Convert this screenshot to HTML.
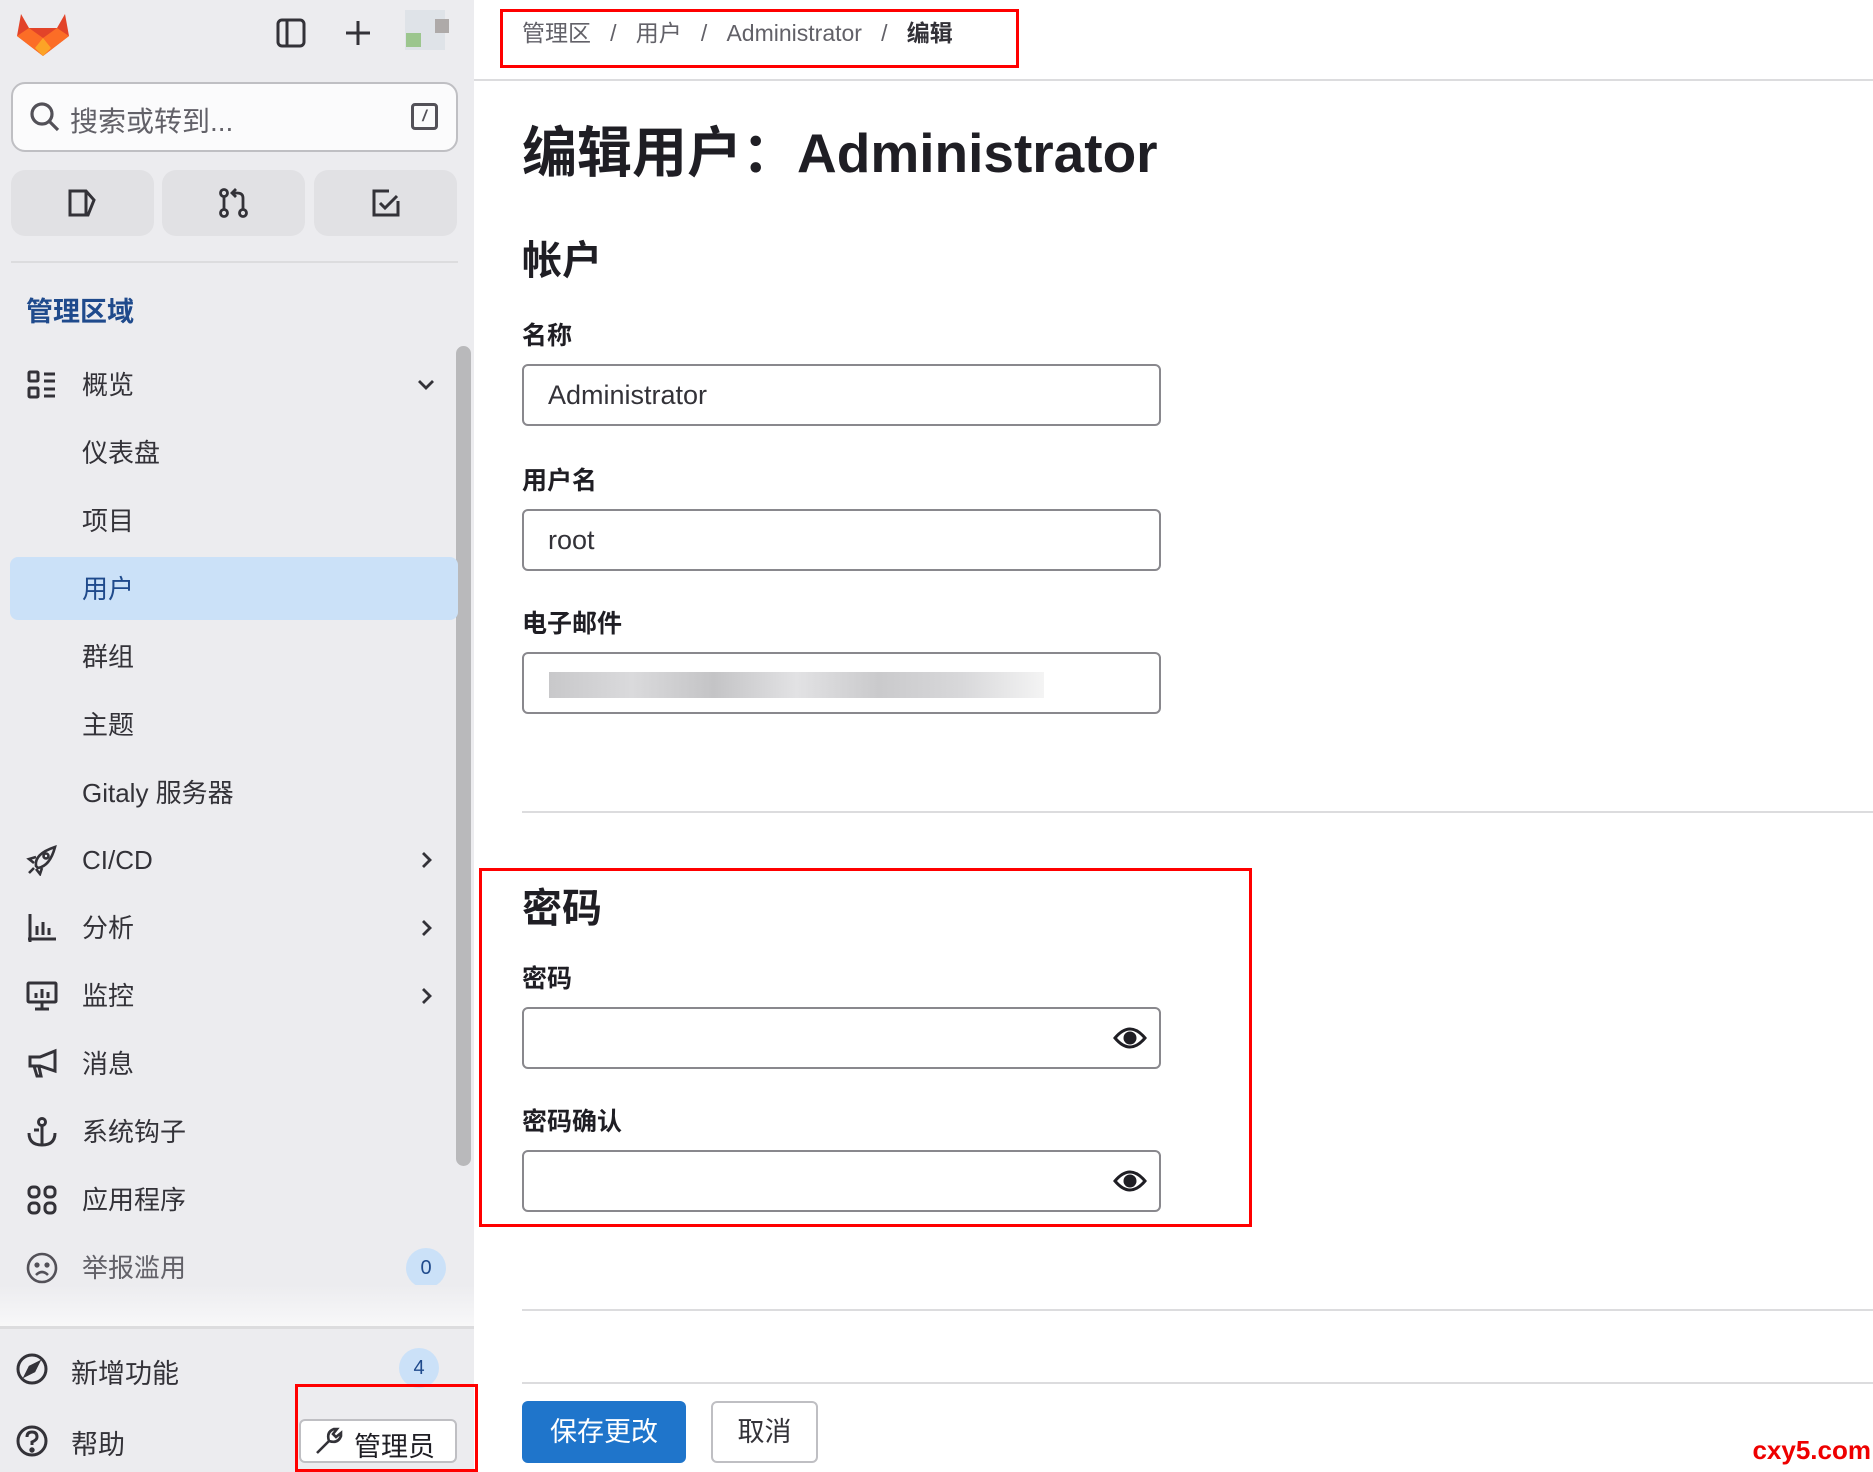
<!DOCTYPE html>
<html><head><meta charset="utf-8"><style>
*{box-sizing:border-box;margin:0;padding:0}
body{width:1873px;height:1472px;position:relative;overflow:hidden;background:#fff;font-family:"Liberation Sans","Noto Sans CJK SC",sans-serif;color:#333238}
.a{position:absolute}
.sb{left:0;top:0;width:474px;height:1472px;background:#ececef}
.nav{position:absolute;left:82px;font-size:26px;color:#333238;line-height:32px}
.ic{position:absolute;left:26px;width:32px;height:32px}
.chev{position:absolute;left:416px;width:20px;height:20px}
.lbl{position:absolute;left:522px;font-size:25px;font-weight:bold;color:#1f1e24}
.inp{position:absolute;left:522px;width:639px;height:62px;border:2px solid #89888d;border-radius:6px;font-size:27px;padding-left:24px;line-height:58px;color:#333238}
.h2{position:absolute;left:522px;font-size:40px;font-weight:bold;color:#1f1e24}
.red{position:absolute;border:3px solid #f00}
.hr{position:absolute;left:522px;right:0;height:2px;background:#dcdcde}
</style></head><body>
<div class="a sb"></div>
<svg class="a" style="left:17px;top:8px" width="52" height="50" viewBox="0 0 52 50"><path d="M4 6 L12 20 H40 L48 6 L52 28 L26 48 L0 28Z" fill="#e24329"/><path d="M0 28 L12 20 L26 30 L26 48Z" fill="#fc6d26"/><path d="M52 28 L40 20 L26 30 L26 48Z" fill="#fc6d26"/><path d="M18 40 L26 30 L34 40 L26 48Z" fill="#fca326"/></svg>
<svg class="a" style="left:276px;top:18px" width="30" height="30" viewBox="0 0 30 30" fill="none" stroke="#333238" stroke-width="3"><rect x="2" y="2" width="26" height="26" rx="4"/><line x1="11" y1="2" x2="11" y2="28"/></svg>
<svg class="a" style="left:345px;top:20px" width="26" height="26" stroke="#333238" stroke-width="3"><line x1="13" y1="1" x2="13" y2="25"/><line x1="1" y1="13" x2="25" y2="13"/></svg>
<div class="a" style="left:405px;top:10px;width:40px;height:40px;background:#dfe3e8"></div>
<div class="a" style="left:406px;top:33px;width:15px;height:14px;background:#9cc68e"></div>
<div class="a" style="left:435px;top:19px;width:14px;height:14px;background:#aeaaa9"></div>
<div class="a" style="left:11px;top:82px;width:447px;height:70px;border:2px solid #bfbfc3;border-radius:14px;background:#fbfbfc"></div>
<svg class="a" style="left:29px;top:101px" width="32" height="32" fill="none" stroke="#535158" stroke-width="3.2"><circle cx="13" cy="13" r="10"/><line x1="20" y1="20" x2="29" y2="29"/></svg>
<div class="a" style="left:70px;top:100px;font-size:28px;color:#626168">搜索或转到...</div>
<div class="a" style="left:411px;top:103px;width:27px;height:27px;border:3px solid #535158;border-radius:4px;font-size:16px;text-align:center;line-height:21px;font-weight:bold;color:#535158;font-style:italic">/</div>
<div class="a" style="left:11px;top:170px;width:143px;height:66px;background:#e1e1e4;border-radius:14px"></div>
<div class="a" style="left:162px;top:170px;width:143px;height:66px;background:#e1e1e4;border-radius:14px"></div>
<div class="a" style="left:314px;top:170px;width:143px;height:66px;background:#e1e1e4;border-radius:14px"></div>
<svg class="a" style="left:67px;top:188px" width="30" height="30" fill="none" stroke="#333238" stroke-width="3"><path d="M3 3 H19 L27 12 L21 27 H3Z"/><line x1="19" y1="3" x2="19" y2="27"/></svg>
<svg class="a" style="left:218px;top:188px" width="32" height="30" fill="none" stroke="#333238" stroke-width="2.8"><circle cx="6" cy="5" r="3.5"/><circle cx="6" cy="25" r="3.5"/><circle cx="25" cy="25" r="3.5"/><line x1="6" y1="9" x2="6" y2="21"/><path d="M25 21 V10 Q25 5 19 5 H15 M18 1 L14 5 L18 9"/></svg>
<svg class="a" style="left:371px;top:188px" width="30" height="30" fill="none" stroke="#333238" stroke-width="3"><path d="M27 13 V27 H3 V3 H18"/><path d="M9 15 L14 20 L26 8"/></svg>
<div class="a" style="left:11px;top:261px;width:447px;height:2px;background:#dcdcde"></div>
<div class="a" style="left:26px;top:290px;font-size:27px;font-weight:bold;color:#1f4a8c">管理区域</div>
<div class="a" style="left:456px;top:346px;width:15px;height:820px;background:#b9b9bb;border-radius:8px"></div>
<div class="a" style="left:10px;top:557px;width:448px;height:63px;background:#cbe1f8;border-radius:8px"></div>
<svg class="ic" style="top:369px" viewBox="0 0 32 32" fill="none" stroke="#333238" stroke-width="3"><rect x="3" y="3" width="9" height="9" rx="1"/><rect x="3" y="19" width="9" height="9" rx="1"/><path d="M18 5H29M18 12H29M18 20H29M18 27H29"/></svg>
<div class="nav" style="top:369px">概览</div>
<svg class="chev" style="top:375px" viewBox="0 0 20 20" fill="none" stroke="#333238" stroke-width="2.8"><path d="M3 6 L10 13 L17 6"/></svg>
<div class="nav" style="top:437px">仪表盘</div>
<div class="nav" style="top:505px">项目</div>
<div class="nav" style="top:573px;color:#1f4a8c">用户</div>
<div class="nav" style="top:641px">群组</div>
<div class="nav" style="top:709px">主题</div>
<div class="nav" style="top:777px">Gitaly 服务器</div>
<svg class="ic" style="top:844px" viewBox="0 0 32 32" fill="none" stroke="#333238" stroke-width="2.6"><path d="M10 22 Q8 10 29 3 Q24 22 12 24Z"/><circle cx="20" cy="12" r="2.5"/><path d="M10 13 L3 15 L8 19 M16 24 L14 30 L10 25 M8 24 L3 29"/></svg>
<div class="nav" style="top:844px">CI/CD</div>
<svg class="chev" style="top:850px" viewBox="0 0 20 20" fill="none" stroke="#333238" stroke-width="2.8"><path d="M7 3 L14 10 L7 17"/></svg>
<svg class="ic" style="top:912px" viewBox="0 0 32 32" fill="none" stroke="#333238" stroke-width="3"><path d="M4 2V30M2 27H30M11 14V23M17 10V23M23 16V23"/></svg>
<div class="nav" style="top:912px">分析</div>
<svg class="chev" style="top:918px" viewBox="0 0 20 20" fill="none" stroke="#333238" stroke-width="2.8"><path d="M7 3 L14 10 L7 17"/></svg>
<svg class="ic" style="top:980px" viewBox="0 0 32 32" fill="none" stroke="#333238" stroke-width="3"><rect x="2" y="3" width="28" height="19" rx="1"/><path d="M16 22V28M9 29H23M10 13V18M16 9V18M22 12V18"/></svg>
<div class="nav" style="top:980px">监控</div>
<svg class="chev" style="top:986px" viewBox="0 0 20 20" fill="none" stroke="#333238" stroke-width="2.8"><path d="M7 3 L14 10 L7 17"/></svg>
<svg class="ic" style="top:1048px" viewBox="0 0 32 32" fill="none" stroke="#333238" stroke-width="3"><path d="M29 3V23L14 18H4V9H14Z M8 18 L11 28 H15 L13 19"/></svg>
<div class="nav" style="top:1048px">消息</div>
<svg class="ic" style="top:1116px" viewBox="0 0 32 32" fill="none" stroke="#333238" stroke-width="3"><circle cx="16" cy="6" r="3.5"/><path d="M16 10V29M3 17Q3 29 16 29Q29 29 29 17M8 14H13"/></svg>
<div class="nav" style="top:1116px">系统钩子</div>
<svg class="ic" style="top:1184px" viewBox="0 0 32 32" fill="none" stroke="#333238" stroke-width="3"><rect x="3" y="3" width="10" height="10" rx="4"/><rect x="19" y="3" width="10" height="10" rx="4"/><rect x="3" y="19" width="10" height="10" rx="4"/><rect x="19" y="19" width="10" height="10" rx="4"/></svg>
<div class="nav" style="top:1184px">应用程序</div>
<svg class="ic" style="top:1252px" viewBox="0 0 32 32" fill="none" stroke="#535158" stroke-width="2.6"><circle cx="16" cy="16" r="14"/><circle cx="11" cy="13" r="1.3" fill="#535158"/><circle cx="21" cy="13" r="1.3" fill="#535158"/><path d="M10 23 Q16 17 22 23"/></svg>
<div class="nav" style="top:1252px;color:#626168">举报滥用</div>
<div class="a" style="left:406px;top:1248px;width:40px;height:40px;border-radius:50%;background:#cbe1f8;color:#1f4a8c;font-size:20px;text-align:center;line-height:40px">0</div>
<div class="a" style="left:0;top:1285px;width:474px;height:42px;background:linear-gradient(#ececef,#f8f8f9)"></div>
<div class="a" style="left:0;top:1326px;width:474px;height:3px;background:#dcdcde"></div>
<svg class="a" style="left:15px;top:1352px" width="34" height="34" viewBox="0 0 34 34" fill="none" stroke="#333238" stroke-width="3"><circle cx="17" cy="17" r="14"/><path d="M23 11 L19 19 L11 23 L15 15Z" fill="#333238"/></svg>
<div class="a" style="left:71px;top:1352px;font-size:27px">新增功能</div>
<div class="a" style="left:399px;top:1348px;width:40px;height:40px;border-radius:50%;background:#cbe1f8;color:#1f4a8c;font-size:20px;text-align:center;line-height:40px">4</div>
<svg class="a" style="left:15px;top:1424px" width="34" height="34" viewBox="0 0 34 34" fill="none" stroke="#333238" stroke-width="3"><circle cx="17" cy="17" r="14"/><path d="M12 13 Q12 8 17 8 Q22 8 22 13 Q22 16 17 18 V21"/><circle cx="17" cy="26" r="1.2" fill="#333238"/></svg>
<div class="a" style="left:71px;top:1423px;font-size:27px">帮助</div>
<div class="a" style="left:299px;top:1419px;width:158px;height:44px;border:2px solid #bfbfc3;border-radius:6px;background:#fff"></div>
<svg class="a" style="left:314px;top:1426px" width="30" height="30" viewBox="0 0 30 30" fill="none" stroke="#333238" stroke-width="2.6"><path d="M3 27 L15 15 M15 15 Q12 6 20 3 L23 3 L19 8 L22 11 L27 7 L27 10 Q24 18 15 15"/></svg>
<div class="a" style="left:354px;top:1425px;font-size:27px;color:#1f1e24">管理员</div>
<div class="red" style="left:295px;top:1384px;width:183px;height:88px"></div>
<div class="a" style="left:522px;top:14px;font-size:23px;color:#626168;white-space:pre">管理区   /   用户   /   Administrator   /   <b style="color:#333238">编辑</b></div>
<div class="red" style="left:500px;top:9px;width:519px;height:59px"></div>
<div class="a" style="left:474px;top:79px;right:0;height:2px;background:#dcdcde"></div>
<div class="a" style="left:522px;top:108px;font-size:55px;font-weight:bold;color:#1f1e24">编辑用户：Administrator</div>
<div class="h2" style="top:228px">帐户</div>
<div class="lbl" style="top:316px">名称</div>
<div class="inp" style="top:364px">Administrator</div>
<div class="lbl" style="top:461px">用户名</div>
<div class="inp" style="top:509px">root</div>
<div class="lbl" style="top:604px">电子邮件</div>
<div class="inp" style="top:652px"></div>
<div class="a" style="left:549px;top:672px;width:495px;height:26px;background:linear-gradient(90deg,#c8c8ca,#dadadc,#c4c4c6,#e2e2e4,#cacacc,#d8d8da,#f4f4f4)"></div>
<div class="hr" style="top:811px"></div>
<div class="h2" style="top:876px">密码</div>
<div class="lbl" style="top:959px">密码</div>
<div class="inp" style="top:1007px"></div>
<div class="lbl" style="top:1102px">密码确认</div>
<div class="inp" style="top:1150px"></div>
<svg class="a" style="left:1113px;top:1024px" width="34" height="28" viewBox="0 0 34 28" fill="none" stroke="#1f1e24" stroke-width="3"><path d="M2 14 Q17 -4 32 14 Q17 32 2 14Z"/><circle cx="17" cy="14" r="5" fill="#1f1e24"/></svg>
<svg class="a" style="left:1113px;top:1167px" width="34" height="28" viewBox="0 0 34 28" fill="none" stroke="#1f1e24" stroke-width="3"><path d="M2 14 Q17 -4 32 14 Q17 32 2 14Z"/><circle cx="17" cy="14" r="5" fill="#1f1e24"/></svg>
<div class="red" style="left:479px;top:868px;width:773px;height:359px"></div>
<div class="hr" style="top:1309px"></div>
<div class="hr" style="top:1382px"></div>
<div class="a" style="left:522px;top:1401px;width:164px;height:62px;background:#1f75cb;border-radius:6px;color:#fff;font-size:27px;text-align:center;line-height:62px">保存更改</div>
<div class="a" style="left:711px;top:1401px;width:107px;height:62px;border:2px solid #bfbfc3;border-radius:6px;color:#333238;font-size:27px;text-align:center;line-height:58px">取消</div>
<div class="a" style="right:2px;top:1435px;font-size:26px;font-weight:bold;color:#e00">cxy5.com</div>
</body></html>
